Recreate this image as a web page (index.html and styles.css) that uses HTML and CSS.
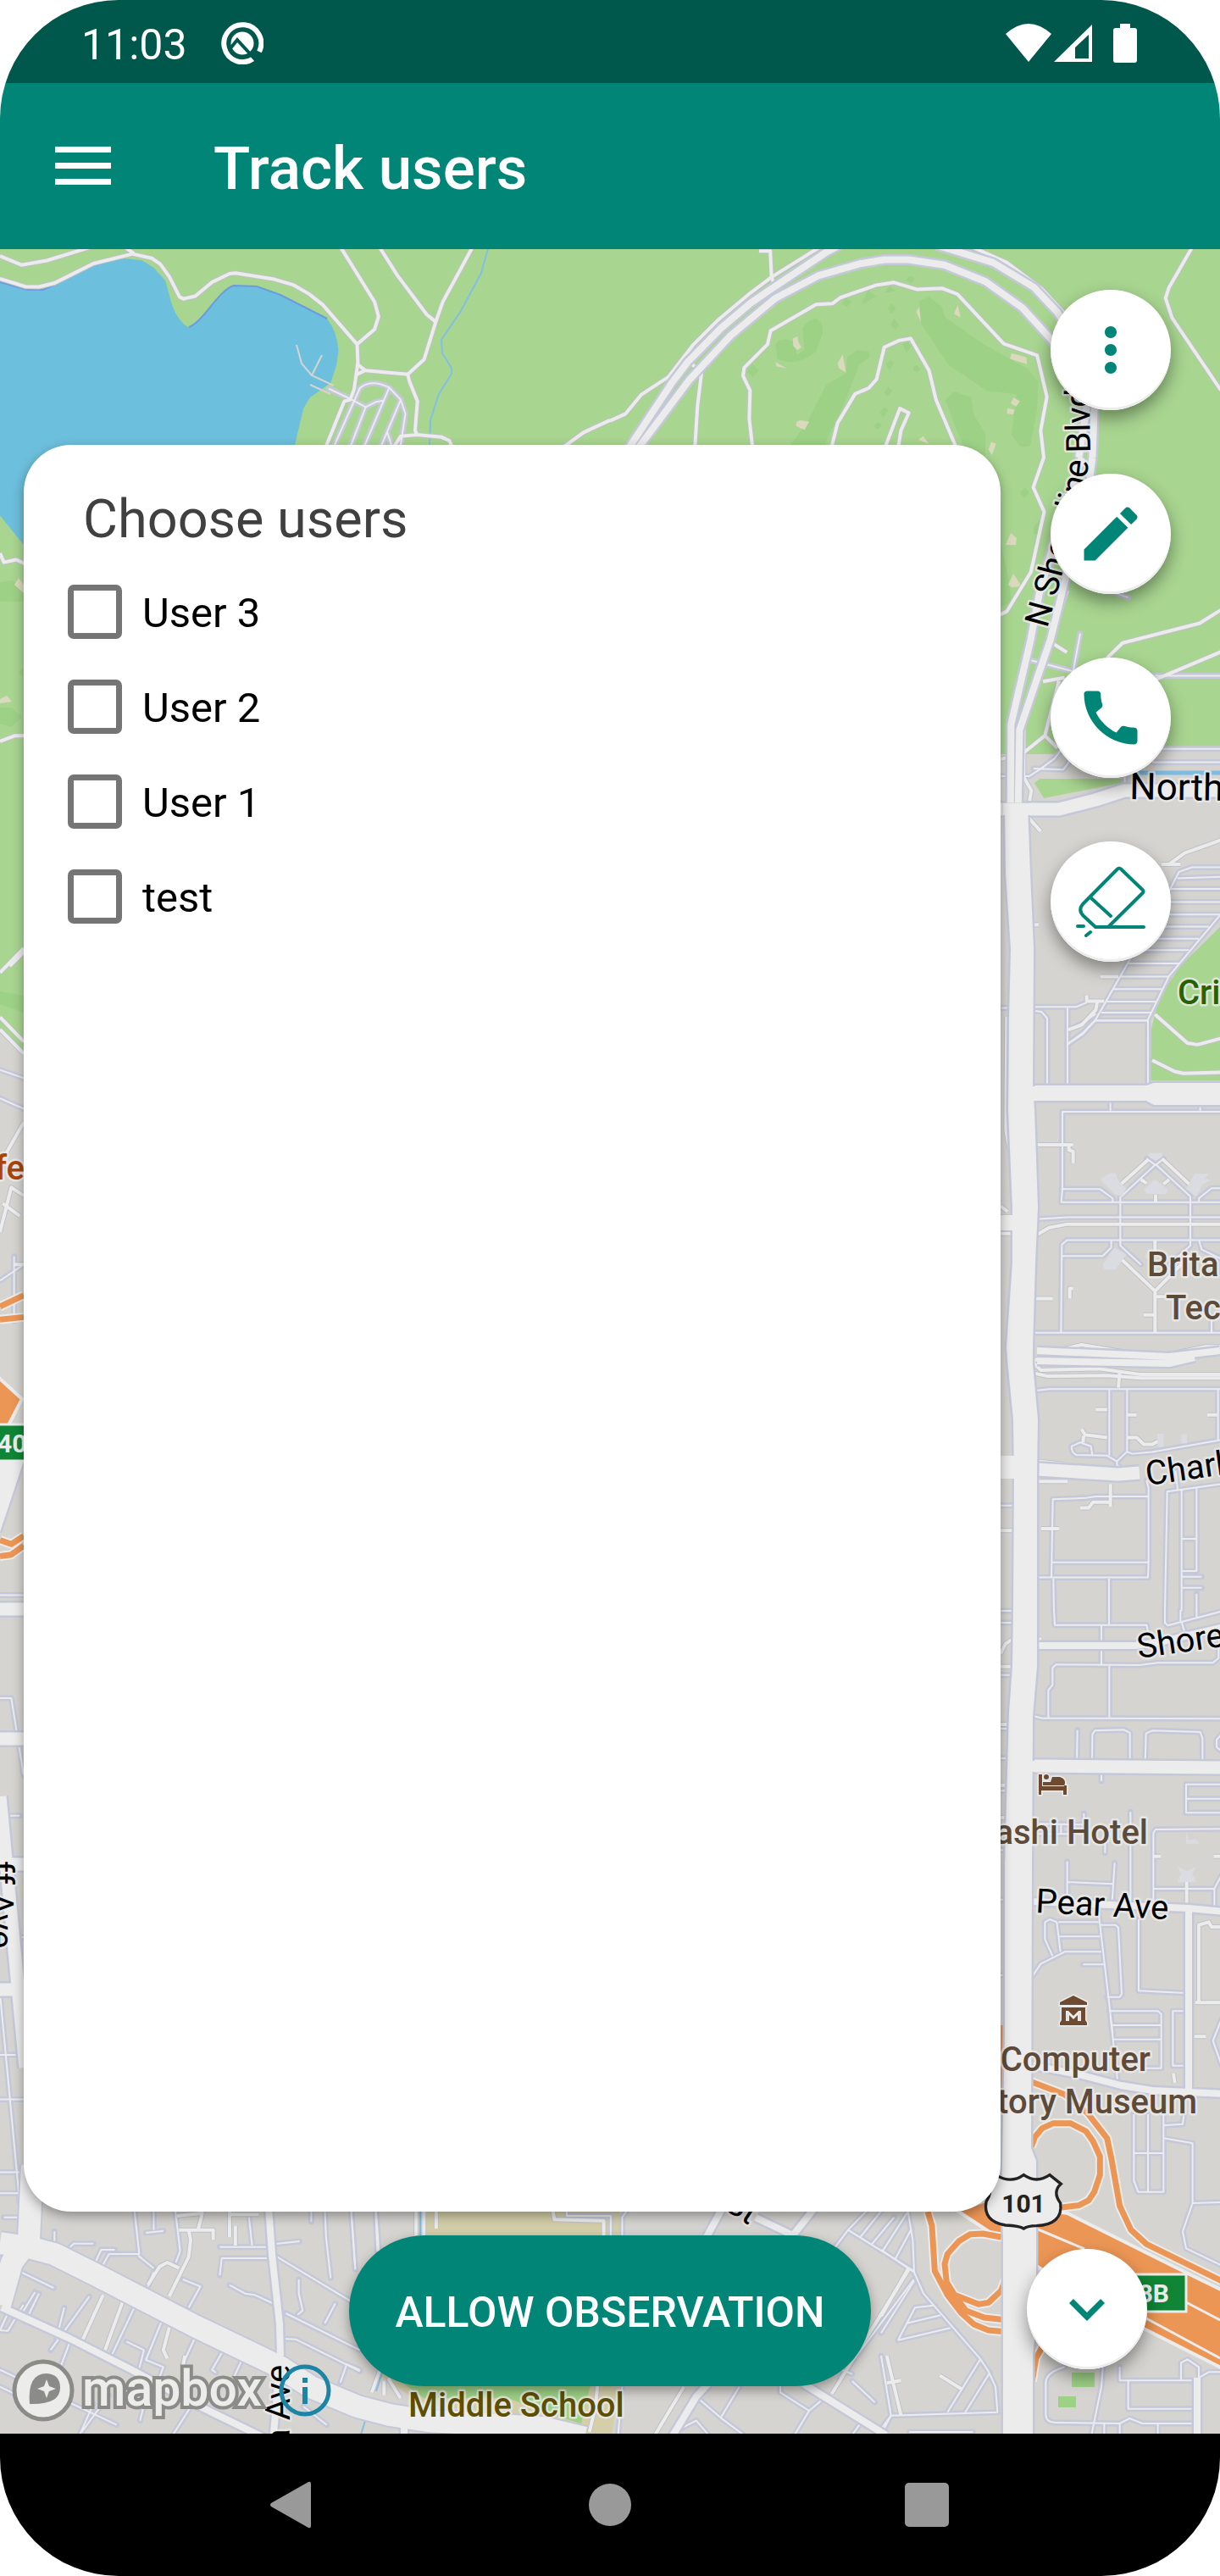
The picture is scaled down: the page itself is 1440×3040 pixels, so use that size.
FILE: index.html
```html
<!DOCTYPE html>
<html lang="en">
<head>
<meta charset="utf-8">
<meta name="viewport" content="width=device-width, initial-scale=1">
<title>Track users</title>
<link rel="stylesheet" href="styles.css">
</head>
<body>
<div class="screen">
  <div class="status-bar">
    <span class="clock">11:03</span>
    <svg class="status-logo" viewBox="0 0 50 50" aria-hidden="true">
      <path d="M37.500 43.500A22 22 0 1 1 45 35" fill="none" stroke="#fff" stroke-width="6"/>
      <circle cx="25" cy="25" r="13.500" fill="#fff"/>
      <path d="M11 31L19 21L41 45" fill="none" stroke="#00574b" stroke-width="4"/>
      <path d="M36 40l6-5 6 7-6 5z" fill="#00574b"/>
    </svg>
    <div class="status-icons">
      <svg class="wifi" viewBox="0 0 54 46" aria-hidden="true"><path d="M0 12Q27-12 54 12L27 45Z" fill="#fff"/></svg>
      <svg class="signal" viewBox="0 0 46 46" aria-hidden="true"><path fill-rule="evenodd" d="M45 1V45H0ZM41 13L25 28V41H41Z" fill="#fff"/></svg>
      <svg class="battery" viewBox="0 0 28 46" aria-hidden="true"><path d="M8 0H20V5H25Q28 5 28 8V43Q28 46 25 46H3Q0 46 0 43V8Q0 5 3 5H8Z" fill="#fff"/></svg>
    </div>
  </div>

  <header class="app-bar">
    <button class="menu-button" type="button" aria-label="Open menu">
      <svg viewBox="0 0 66 46" aria-hidden="true"><path d="M0 0H66V7H0ZM0 19H66V26H0ZM0 38H66V45H0Z" fill="currentColor"/></svg>
    </button>
    <h1>Track users</h1>
  </header>

  <main class="map-view">
    <svg class="map" viewBox="0 294 1440 2578" preserveAspectRatio="xMidYMid slice" aria-label="Map">
      <defs>
        <!-- lake side -->
        <g id="paths-lake" transform="scale(.4592 .34436)">
          <path d="M0 877L55 908L120 893L235 846M0 955L65 982L100 983L140 970L240 903L340 870L390 885L412 905L435 948L462 1018L472 1024L502 1015L545 967L590 938L605 936L705 957L755 977L795 1008L830 1045L918 1180M320 846L345 870"/>
          <path d="M875 846L963 1035L973 1085L963 1128L918 1180L920 1250L940 1270L1048 1283L1090 1232L1120 1103L1138 1035L1215 846M975 846L1022 945L1097 1078L1120 1103M920 1240L915 1290L910 1335L900 1370L885 1375L835 1540M915 1285L940 1268"/>
          <path d="M1048 1283L1052 1305L1073 1375L1067 1475L1072 1490L1135 1498L1155 1510L1165 1540M1072 1490L1030 1495L1008 1540M1440 1540L1500 1482L1568 1440"/>
        </g>
        <g id="lots-lake" transform="scale(.4592 .34436)">
          <path d="M845 1332L905 1370L940 1395L965 1378L985 1373M855 1540L925 1330Q955 1298 1000 1328L1030 1370L1042 1418L1028 1540M940 1395L898 1540M1000 1330L933 1540M1030 1370L976 1540M995 1480L1010 1540"/>
        </g>
        <!-- golf course -->
        <g id="paths-golf" transform="translate(720) scale(.4592 .34436)">
          <path d="M0 1442L40 1418L80 1353L150 1292L215 1180L275 1100L360 1005L415 950L540 846M383 860H412L415 945L428 1010M930 846L1020 900L1110 990L1165 1070M205 1240L235 1280L225 1390L218 1540"/>
          <path d="M367 1540L358 1435L360 1338L342 1288L345 1260L405 1180L413 1133L530 1043L572 1040L592 1020L685 977L730 968L790 992L853 988L893 1008L1012 1178L1098 1218L1123 1360L1107 1475L1115 1568L1088 1670L1116 1754L1082 1960L1020 2095L960 2135"/>
          <path d="M568 1540L585 1450L630 1350L665 1330L685 1300L705 1190L743 1167L773 1160L820 1270L838 1370L892 1540M705 1540L745 1400L768 1415L748 1475L740 1540M1497 846L1437 985L1428 1022L1445 1090L1570 1337"/>
        </g>
        <g id="arc-golf" transform="translate(720) scale(.4592 .34436)">
          <path d="M46 1540L160 1310L200 1240L285 1125L360 1040L420 985L555 865L590 840M70 1540L205 1300L310 1150L425 1022L535 945L645 903L705 890H768L860 908L965 965L1060 1055L1135 1165L1200 1290L1225 1400L1205 1568M840 840L985 900L1090 985L1150 1070L1200 1180L1235 1300L1245 1400L1240 1568"/>
        </g>
        <g id="arc-south" transform="translate(1160 540) scale(.33333 .44643)">
          <path d="M350 0L250 230L200 360L170 480L100 705L98 930M388 0L375 80L290 330L240 480L130 720L125 930"/>
        </g>
        <g id="paths-north" transform="translate(1160 540) scale(.33333 .44643)">
          <path d="M245 490L298 515M213 592L290 582M270 590L220 735L145 780L65 797M220 735L265 768M440 530L495 490L768 438L845 402M610 587L845 513M300 350L145 700V845L172 880L165 910M160 950L205 988"/>
          <path d="M633 1075H700M660 1075L715 1045L800 1023L845 1010M417 1372H480M366 1437H430M368 1440V1422M405 1440L400 1460L350 1500L305 1512M180 1235H198M610 1472L725 1548L760 1552L845 1535M600 1593L680 1623L710 1628L845 1625"/>
        </g>
        <g id="lots-north" transform="translate(1160 540) scale(.33333 .44643)">
          <path d="M165 535L320 565L345 465M440 350L515 370M610 577H845M620 770H845M600 805H845M65 842H165L205 823L255 795L280 770M180 822L285 825L310 800M503 840V880"/>
          <path d="M300 1550L355 1520L400 1485L665 1138L695 1095L740 1083H845M845 1205L660 1370L585 1485V1660M690 1112L845 1108M665 1140H845M640 1175H845M610 1208H840M585 1240H800M560 1272H765M540 1302H730M515 1337H695M485 1372H660M460 1405H635M440 1438H612M420 1467H595M395 1488H585M180 1452H330L370 1440M180 1462L208 1465L228 1482V1660M300 1455V1660M65 1455H100"/>
        </g>
        <!-- technology campus -->
        <g id="paths-campus" transform="translate(1160 1200) scale(.33333 .44643)">
          <path d="M187 338H320M305 342V352L320 356V387M190 577L235 557L300 548H845M490 442L585 378M635 375L735 445M560 430L580 440M660 430L640 442M612 470V490M490 640L610 725V833M610 725L735 630M610 590V620M610 740H650M570 788H610M180 745H248M308 745V718H320"/>
          <path d="M180 910L235 887L350 867L580 896L650 893L790 872H845M180 915L205 934L410 930L555 945H845M180 942L230 950L440 948L560 955H845M485 940L480 980M400 1038H440M511 1052H545M795 1052H830M350 1090L362 1105L440 1112M357 1108L355 1125M511 1112H545L570 1130H600L620 1122M195 1175L285 1182M195 1228H300M452 1235V1295M345 1298H375L390 1283H450M207 1353H270"/>
          <path d="M85 0L82 300L95 350M63 500L88 515M63 573H105M63 1358H105"/>
        </g>
        <g id="lots-campus" transform="translate(1160 1200) scale(.33333 .44643)">
          <path d="M302 35L350 18L400 -8M302 72L355 45L398 10H583M452 222V248M770 232V248M845 251H282V455L278 490H845M278 455H415L460 480V490M190 535L300 530H845M487 475V605L560 655M735 475V605L660 655M490 475L612 390L735 475M580 375L612 392L640 375M845 453H810L765 480V490M845 590H298L280 602L277 833M280 632H425L455 610V590M765 590L775 615L845 640M178 835H845M810 790V833"/>
          <path d="M190 988L235 984H845M448 984V1160M511 984V1150M833 984V1120M388 1158L383 1135L345 1125L315 1135Q312 1150 330 1158L440 1160L475 1175L510 1150L530 1155L600 1150L845 1118M475 1175V1185L515 1205M243 1480L248 1275L365 1272L400 1268H587M580 1225L587 1245V1440L585 1482H195M243 1442H585M250 1485L252 1570M447 1485V1570M845 1235L653 1255L645 1570M704 1250V1570M757 1245V1465H705M705 1380H757M705 1480H775M705 1509H775M757 1525V1570M683 1200L690 1250M63 1292H110"/>
        </g>
        <!-- around Pear Ave -->
        <g id="lots-pear" transform="translate(1160 1900) scale(.33333)">
          <path d="M252 0L255 53H580L587 85M447 0V53M420 53V195M645 0V45L655 55L845 5M700 0V40M757 0V30M705 45L715 80M232 380V285L247 265V205L260 193L555 195L620 187H815L835 170V130M448 195V380M178 375L210 383L845 385M335 425L333 540M387 540L388 440L397 427L500 424L521 435V540M575 540L578 437L600 427L770 432L778 455V545M845 440L828 460V485L845 500M420 565V605M845 617H720V718H845M720 668H845M358 720V760L200 757M277 757V793M195 793H320M433 860V820M523 715V1030M604 1035V790L612 777L845 775M604 987H820L845 940M820 987V1060M299 890V1010M467 895L458 1035M299 963L460 970"/>
          <path d="M410 1070L460 1500M220 1105L237 1095L262 1105L275 1210M220 1105V1165L247 1225M268 1105H410M272 1156H415M178 1293L205 1253L290 1210H420M355 1255H428M415 1115H470L480 1125L492 1360L485 1370H440M552 1095V1348L715 1356M715 1420H673V1613H715M447 1420H620L632 1430V1622H470M453 1470H632M460 1520H632M63 3H110M63 45H110M63 230H105M63 420H90M63 525H90M63 640H85M63 850H80M63 1025H78M63 1293H78"/>
        </g>
        <g id="paths-pear" transform="translate(1160 1900) scale(.33333)">
          <path d="M604 872H630M818 872H845M722 930V1040M765 1390V1115L800 1105L810 1122H845M752 1390H845M63 155L80 120L110 100M63 200H105M192 103H207M63 405H90M63 620H85M63 735H85"/>
        </g>
        <!-- interchange -->
        <g id="lots-junction" transform="translate(1040 2380) scale(.33333)">
          <path d="M812 0L838 230M1205 10L1175 85L1205 170M1000 280V620H910L895 580V345M945 345V620M895 483H1000M1000 385L1068 380L1072 350M1000 430L1103 448V660L1068 760L1080 820L1205 880M1103 660L1205 657"/>
          <path d="M5 830L95 690M50 858L108 750M0 825L117 905L150 980L350 1210L380 1255L405 1310L412 1400L35 1412L0 1200M117 905L112 790L95 690M117 935L0 1120M60 1145L120 1030L185 1022M90 1085L210 1057M60 1145L245 1102M350 1215L235 1400M385 1260L298 1400M35 1412L0 1460M100 1470H325"/>
          <path d="M650 1240Q580 1260 583 1300V1410Q585 1437 620 1437L845 1440V1480M785 1240L780 1310L745 1480M845 1240V1288H1110M875 1290V1388H1108M845 1440L880 1422L925 1440H1108M980 1440V1480M790 1440V1480M1062 1290V1225L1085 1213L1125 1240V1278L1160 1258H1205"/>
        </g>
        <g id="paths-junction" transform="translate(1040 2380) scale(.33333)">
          <path d="M1035 200L1040 235M1110 70H1150M97 890L0 1060M20 1200L70 1410M20 1297L70 1288M208 1270L288 1320"/>
        </g>
        <!-- residential south-west -->
        <g id="lots-sw" transform="translate(0 2560) scale(.4592 .33333)">
          <path d="M712 310L905 470M735 510L925 640M590 410L630 440L655 445L710 480M730 600L760 602L925 715M768 390V440L778 500L765 515M862 475L835 545M345 140L358 300L280 300M355 305L395 350M395 140V215M375 225L420 218M0 85H60M10 170H50M140 220V260M180 275L190 263H240M245 330L260 285H295M262 345L280 300M380 415L395 365M565 275H695M640 170L648 270M565 375L570 315H695M705 265L770 255M800 140V185M835 140L838 240L850 385M902 140L913 350M965 140L970 290M450 140L463 290L452 330M55 365L138 420M90 435L50 525M100 440L65 540M230 450L130 640M165 490L145 600M345 490L285 665"/>
          <path d="M415 540L375 675L420 700L395 790M325 610L370 640L355 720M500 600L470 690M570 650L545 710L555 720M620 680L600 740M0 710L300 905M180 610L150 720M240 830L205 940M280 800L210 930M500 820L440 950M380 780L360 890M0 770L120 850M20 510L0 570L20 572L60 480M485 490L515 415L470 390M890 695L875 755M780 840L840 905M0 330L40 350M890 690L925 710"/>
        </g>
        <g id="paths-sw" transform="translate(0 2560) scale(.4592 .33333)">
          <path d="M435 450L460 380L485 310L490 250L485 215M460 350L430 330L410 345L380 410M460 215H548V250M455 165L520 155L510 210M590 140V240M605 200V270M590 160H665M265 445L212 605M315 470L270 640M435 560L420 640L430 670M475 660L470 700"/>
        </g>
        <g id="paths-school" transform="translate(400 2580) scale(.4847 .33333)">
          <path d="M188 80V175M207 80V175M237 80V150M520 80L525 118L645 122V175M1390 290L1200 735M840 710L770 880M630 700L625 780L610 870M80 730L100 650M110 740V690M120 680L150 750"/>
        </g>
        <g id="lots-school" transform="translate(400 2580) scale(.4847 .33333)">
          <path d="M555 80V105H662V175M700 90L690 110V175M1240 155L1290 80M1270 180L1325 80M1298 205L1352 110M1240 155L1400 300M1240 155L1180 270M1400 330L1220 680M1225 650L1250 665M1250 690L1305 765M870 745L930 820L985 880M930 820L975 710M830 860L870 830L900 880M1075 700V730L1145 795L1110 880M1145 795L1190 740M1250 880L1275 830M1345 810L1320 880M690 710L680 880M90 80L98 240M30 80L40 295"/>
        </g>
        <!-- west edge -->
        <g id="lots-west" transform="translate(0 1100) scale(.33333 .9566)">
          <path d="M0 170L84 180M0 205L84 218M0 430L84 410M0 818H84M0 945H40L84 1040M0 1090H70M0 1240H84M0 1385H84M0 1440H84M0 1530H84M0 1310L70 1568M50 480V400"/>
        </g>
        <g id="paths-west" transform="translate(0 1100) scale(.33333 .9566)">
          <path d="M0 50L84 20M0 105L84 135M0 120L84 150M10 280L84 235M0 370L40 315L84 325M10 335L70 350M48 410H84"/>
        </g>
        <g id="paths-west-park" transform="translate(0 540) scale(.3827)">
          <path d="M0 295L12 323L50 315L76 327M0 875L45 858H76M30 1568L76 1522"/>
        </g>
        <!-- wide roads -->
        <g id="streets">
          <path d="M1224 1942H1340L1373 1937L1445 1920M1218 2244L1403 2252L1445 2256M1403 2256V2470M1216 2437L1273 2448L1323 2461L1360 2467L1445 2471M1413 2806V2876M853 2605L834 2640M892 2617L936 2638L962 2605M948 2813L1046 2874M836 2813L822 2828L793 2876M317 2605L321 2660L330 2743L331 2780M330 2790L323 2872M2 2723L83 2760L156 2797L230 2837L312 2877M477 2860V2876"/>
          <path d="M1224 1594L1380 1601L1440 1594M1224 1606L1380 1609L1410 1602"/>
        </g>
        <g id="avenues">
          <path d="M1180 955H1250L1293 944L1327 933H1445M1218 2084L1445 2086M1180 1443H1197M1180 1732H1197M1224 1734L1320 1740L1345 1738M0 1899H28M0 2052H28M0 2200H28M0 2348H28M0 2120L30 2440"/>
        </g>
        <g id="boulevards">
          <path d="M38 2555L34 2643L14 2670L0 2720"/>
          <path d="M0 2647L34 2652L64 2660L110 2683L230 2745L330 2793L367 2817L422 2840L460 2850L505 2857L640 2865L690 2877"/>
        </g>
        <g id="ramps" transform="translate(1040 2380) scale(.33333)">
          <path d="M532 230L650 275L730 340L800 430L815 500L845 670L885 755L940 805L1205 935M532 460L545 425L570 395L610 377H670L725 405L750 440L775 495V560L755 620L735 650L700 668L640 675M432 30L428 260"/>
          <path d="M165 690L180 740L190 900L235 985L285 1050L330 1090L380 1110L440 1115M240 960L300 1040L365 1065L440 1073M425 780L360 768L315 770L275 795L235 840L225 875L232 940L260 985L345 1018L380 1012L425 970L440 930M575 1160L548 1210L535 1290"/>
        </g>
        <g id="ramps-west" transform="translate(0 1100) scale(.33333 .9566)">
          <path d="M0 462L84 448M0 478L84 475M0 750L40 755L84 745M0 770L40 768L84 757"/>
        </g>
        <path id="shoreline" d="M1236 742L1252 684L1282 570L1287 530L1285 430"/>
      </defs>

      <rect class="land" y="294" width="1440" height="2578"/>
      <path class="park" d="M0 294H1440V882H1380L1240 890H600V1243H28L0 1218Z"/>
      <path class="park" d="M1221 924L1227 919H1328V923L1232 942ZM1440 1094L1393 1140L1368 1178L1359 1214L1358 1275H1440Z"/>
      <path class="water" transform="scale(.4592 .34436)" d="M0 965L70 992L110 992L150 970L240 905L320 886L365 892L395 918L425 962L440 1035Q455 1100 485 1122Q510 1110 540 1050Q575 990 600 978L660 980L720 1010L840 1092Q865 1130 870 1200L865 1250L850 1312L820 1340L797 1362L780 1400L755 1540L400 1867H61L0 1766Z"/>
      <path class="shore" d="M223 386C240 380 258 342 276 337L303 338L331 348L386 376M0 333L32 342L51 342L69 334"/>
      <path class="pier" d="M350 407L356 429L368 443L394 455M380 419L368 443M366 454L390 465"/>
      <path class="stream" d="M577 290L568 322L544 367L521 401L522 417L533 434L533 441L518 465L508 496L507 530"/>

      <g class="wood" transform="translate(720) scale(.4592 .34436)">
        <path d="M795 1030L820 1018L852 1050L862 1088L960 1180L1070 1260L1100 1305L1098 1400L1080 1528L1055 1532L1032 1490L1045 1350L970 1340L870 1250L800 1110ZM862 1370L885 1342L928 1362L935 1420L965 1490V1568H920L890 1470Z"/>
        <path d="M425 1180Q440 1150 470 1170L480 1215L500 1200L495 1125Q525 1070 545 1110L547 1140L530 1205Q480 1260 430 1230ZM605 1280L610 1225L635 1200L665 1205L667 1225L640 1250L600 1390L535 1568H440L510 1440L555 1320Z"/>
        <path d="M760 960l12-16 12 10-10 17zM595 1040l12-20 14 15-12 16zM650 1030l14-36 20 22-32 24zM705 1003l14-23 14 18zM714 1058l10-20 10 20-10 18zM722 1115l8-23 12 20-8 18zM752 1180l12-14 10 22-12 20zM710 1250l10-16 10 10-12 24zM778 1265l8-15 12 14-10 14zM705 1345l10-20 10 12-10 20zM693 1415l12-20 10 10-12 26zM677 1460l12-14 10 12-12 16zM352 1275l14-28 16 22-14 24z"/>
      </g>
      <g class="wood">
        <path d="M0 687L15 685L28 697V710H0ZM0 835H13L26 846L13 858L0 854ZM22 793L28 788V800ZM1181 640L1190 680L1194 710L1181 716ZM1204 582l6-7 5 6-6 7zM1220 622l6-7 6 6-5 12-7-3zM0 1170L28 1175V1195L0 1185Z"/>
      </g>
      <g class="sand" transform="translate(720) scale(.4592 .34436)">
        <path d="M470 1160L482 1152L484 1172L492 1190L482 1200L471 1185ZM585 1245L598 1215L607 1277L588 1262ZM425 1240L455 1263L428 1255ZM1032 1210L1070 1225L1072 1248L1028 1230ZM884 1075L894 1045L901 1088ZM787 1068L795 1053L799 1103ZM1037 1362L1054 1375L1044 1393L1030 1382ZM480 1445L488 1440L512 1445L500 1473L478 1460ZM980 1515L992 1520L982 1560L973 1540ZM793 1507L805 1495L820 1522ZM1022 1398L1040 1405L1036 1420L1020 1417Z"/>
      </g>
      <path class="sand" d="M1187 643L1193 629L1200 635L1199 643ZM1190 690L1196 677L1206 692L1194 693ZM17 690L22 682L28 690V700ZM0 825L8 821L14 828L0 830Z"/>

      <path class="school" d="M503 2605H732V2660H503ZM443 2800H732L722 2876H700L632 2852L500 2838Z"/>
      <path class="wood" d="M472 2810H698L686 2860L640 2846L600 2830H500Z"/>
      <path class="stream" d="M496 2605V2640M444 2822L451 2800M431 2857L426 2873"/>
      <path class="canal" d="M1343 912H1440"/>

      <g class="lot-case">
        <use href="#lots-lake"/><use href="#lots-north"/><use href="#lots-campus"/><use href="#lots-pear"/><use href="#lots-junction"/><use href="#lots-sw"/><use href="#lots-school"/><use href="#lots-west"/>
      </g>
      <g class="path-case">
        <use href="#paths-lake"/><use href="#paths-golf"/><use href="#paths-north"/><use href="#paths-campus"/><use href="#paths-pear"/><use href="#paths-junction"/><use href="#paths-sw"/><use href="#paths-school"/><use href="#paths-west"/><use href="#paths-west-park"/>
      </g>
      <g class="lot"><use href="#lots-lake"/><use href="#lots-north"/><use href="#lots-campus"/><use href="#lots-pear"/><use href="#lots-junction"/><use href="#lots-sw"/><use href="#lots-school"/><use href="#lots-west"/></g>
      <g class="path">
        <use href="#paths-lake"/><use href="#paths-golf"/><use href="#paths-north"/><use href="#paths-campus"/><use href="#paths-pear"/><use href="#paths-junction"/><use href="#paths-sw"/><use href="#paths-school"/><use href="#paths-west"/><use href="#paths-west-park"/>
      </g>
      <path class="building" transform="translate(1160 1200) scale(.33333 .44643)" d="M585 360H635V370L613 380L591 372ZM416 430L450 413H470L480 433L508 453L492 475L465 468ZM572 455L610 430L655 455L650 468H580ZM720 455L750 415H800L785 427L808 432L780 442L755 475ZM425 655L465 610L508 628L470 668H430ZM572 635L590 612V640ZM617 1102H640V1137H620ZM703 1103H723V1128H703Z"/>
      <path class="building" d="M1400 2161V2176H1416L1411 2170L1403 2172ZM1390 2203L1401 2208L1412 2203L1407 2211L1412 2221H1390L1394 2211Z"/>

      <g class="street-case"><use href="#streets"/><use href="#arc-golf"/><use href="#arc-south"/></g>
      <g class="avenue-case"><use href="#avenues"/></g>
      <g class="boulevard-case"><use href="#boulevards"/></g>
      <g class="street"><use href="#streets"/><use href="#arc-golf"/><use href="#arc-south"/></g>
      <g class="avenue"><use href="#avenues"/></g>
      <path class="road-area" d="M1219 1281H1353L1362 1278H1445V1304H1362L1353 1299H1219ZM0 1724H28L0 1808Z"/>
      <g class="boulevard"><use href="#boulevards"/></g>

      <path class="highway" d="M1130 2609L1163 2597L1260 2612L1400 2682L1445 2704V2796L1350 2748L1300 2722L1220 2672L1180 2642Z"/>
      <path class="highway" d="M-8 1620L26 1651L10 1682H-8Z"/>
      <path class="lane" d="M1223 2630L1280 2654M1400 2717L1440 2738M1353 2736L1440 2783"/>
      <g class="ramp-case"><use href="#ramps"/><use href="#ramps-west"/></g>
      <g class="ramp"><use href="#ramps"/><use href="#ramps-west"/></g>
      <path class="road-area" d="M1186 950L1187 1030L1193 1120L1191 1200L1190 1310L1195 1425V1490L1188 1590L1190 1615L1196 1675L1197 1740L1196 1900L1195 1967L1191 2020L1186 2200V2400L1182 2600L1184 2640V2876H1219V2780L1223 2740V2550L1217 2535L1218 2200L1219 2025L1224 1967V1740L1225 1675L1219 1610L1219 1590L1222 1490L1225 1425L1221 1310L1219 1280L1220 1120L1216 1030L1213 950Z"/>
      <path class="road-fill" d="M1184 948H1230V962H1184ZM1180 1434H1198V1452H1180ZM1180 1718H1198V1745H1180ZM1215 1282H1230V1299H1215ZM1215 2078H1230V2091H1215Z"/>
      <path class="wood" d="M1265 2800H1292V2817H1265ZM1249 2828H1270V2841H1249Z"/>

      <!-- road shields -->
      <path class="shield" transform="translate(1040 2380) scale(.33333)" d="M410 562Q460 592 505 560Q550 592 597 560L637 592Q605 620 635 660Q645 735 550 740Q520 740 505 750Q490 740 440 738Q360 725 372 655Q395 620 380 595Z"/>
      <text class="shield-text" x="1208" y="2611" text-anchor="middle">101</text>
      <rect class="exit" x="1320" y="2684" width="80" height="44"/>
      <text class="exit-text" x="1380" y="2717" text-anchor="end">8B</text>
      <rect class="exit" x="-40" y="1681" width="90" height="43"/>
      <text class="exit-text" x="-3" y="1714">40</text>

      <!-- point-of-interest symbols -->
      <path class="poi" d="M1226 2094h4v14h26q4-8-5-11h-9l-2 6h-9v4h28v11h-4v-5h-26v5h-3zM1232 2097a3 3 0 1 1 6 0a3 3 0 1 1-6 0"/>
      <path class="poi" fill-rule="evenodd" d="M1251 2363L1267 2355L1283 2363V2366H1251ZM1253 2369H1281V2384L1283 2387V2390H1251V2387L1253 2384ZM1258 2385H1262V2378L1267 2383L1272 2378V2385H1276V2373H1273L1267 2379L1261 2373H1258Z"/>

      <!-- labels -->
      <g class="road-label">
        <text><textPath href="#shoreline">N Shoreline Blvd</textPath></text>
        <text class="major-label" x="1333" y="943" transform="rotate(1 1333 943)">North</text>
        <text x="1354" y="1753" transform="rotate(-8 1354 1753)">Charl</text>
        <text x="1344" y="1957" transform="rotate(-8 1344 1957)">Shore</text>
        <text x="1222" y="2257" transform="rotate(3 1222 2257)">Pear Ave</text>
        <text transform="translate(-13 2196) rotate(90)">ff Ave</text>
        <text transform="translate(342 2888) rotate(-90)">a Ave</text>
        <text transform="translate(853 2606) rotate(33)">St</text>
      </g>
      <g class="place-label">
        <text x="1354" y="1506">Brita</text>
        <text x="1376" y="1557">Tec</text>
        <text x="1355" y="2176" text-anchor="end">ashi Hotel</text>
        <text x="1358" y="2444" text-anchor="end">Computer</text>
        <text x="1413" y="2494" text-anchor="end">tory Museum</text>
        <text class="park-label" x="1390" y="1185">Cri</text>
        <text class="school-label" x="482" y="2852">Middle School</text>
        <text class="food-label" x="29" y="1392" text-anchor="end">fe</text>
      </g>
    </svg>

    <section class="card" aria-labelledby="card-title">
      <h2 id="card-title">Choose users</h2>
      <label class="user"><input type="checkbox"><span>User 3</span></label>
      <label class="user"><input type="checkbox"><span>User 2</span></label>
      <label class="user"><input type="checkbox"><span>User 1</span></label>
      <label class="user"><input type="checkbox"><span>test</span></label>
    </section>
    <button class="allow" type="button">ALLOW OBSERVATION</button>

    <div class="tools">
      <button class="fab" type="button" aria-label="More options"><svg viewBox="0 0 24 24"><path fill="currentColor" d="M12 8c1.100 0 2-.9 2-2s-.9-2-2-2-2 .9-2 2 .9 2 2 2zm0 2c-1.100 0-2 .9-2 2s.9 2 2 2 2-.9 2-2-.9-2-2-2zm0 6c-1.100 0-2 .9-2 2s.9 2 2 2 2-.9 2-2-.9-2-2-2z"/></svg></button>
      <button class="fab" type="button" aria-label="Edit"><svg viewBox="0 0 24 24"><path fill="currentColor" d="M3 17.250V21h3.750L17.810 9.940l-3.750-3.750L3 17.250zM20.710 7.040c.39-.39.39-1.020 0-1.410l-2.340-2.340c-.39-.39-1.020-.39-1.410 0l-1.830 1.830 3.750 3.750 1.830-1.830z"/></svg></button>
      <button class="fab" type="button" aria-label="Call"><svg viewBox="0 0 24 24"><path fill="currentColor" d="M20.010 15.380c-1.230 0-2.420-.2-3.530-.56-.35-.12-.74-.03-1.010.24l-1.570 1.970c-2.830-1.350-5.480-3.900-6.890-6.830l1.950-1.660c.27-.28.35-.67.24-1.020-.37-1.110-.56-2.300-.56-3.530 0-.54-.45-.99-.99-.99H4.190C3.650 3 3 3.240 3 3.990 3 13.280 10.730 21 20.010 21c.71 0 .99-.63.99-1.180v-3.450c0-.54-.45-.99-.99-.99z"/></svg></button>
      <button class="fab" type="button" aria-label="Erase"><svg viewBox="0 0 84 84"><path fill="none" stroke="currentColor" stroke-width="4" stroke-linecap="round" stroke-linejoin="round" d="M54 3.500L80 28.500Q81 30 80 31.500L39 72M81 72H24L10 59Q3 52 9 45L50 3.500Q52 2 54 3.500M18 37L42 59M3 71H10M13 82L18 78"/></svg></button>
    </div>
    <button class="fab collapse" type="button" aria-label="Collapse panel"><svg viewBox="0 0 24 24"><path fill="currentColor" d="M16.590 8.590L12 13.170 7.410 8.590 6 10l6 6 6-6z"/></svg></button>

    <div class="attribution">
      <a class="mapbox" href="#mapbox">
        <svg viewBox="0 0 74 74" aria-hidden="true"><circle cx="37" cy="37" r="34" fill="#ececea" stroke="#8b8b88" stroke-width="5"/><path d="M21 53Q18 17 41 17Q57 18 57 34Q57 54 21 53Z" fill="#8b8b88"/><path d="M41 24l3 8 8 3-8 3-3 8-3-8-8-3 8-3z" fill="#ececea"/></svg>
        <span>mapbox</span>
      </a>
      <button class="info" type="button" aria-label="About this map"><svg viewBox="0 0 62 62"><circle cx="31" cy="31" r="28" fill="none" stroke="currentColor" stroke-width="5"/><path d="M28 16h6v6h-6zM28 27h6v20h-6z" fill="currentColor"/></svg></button>
    </div>
  </main>

  <nav class="system-nav" aria-label="System">
    <button type="button" aria-label="Back"><svg viewBox="0 0 56 56"><path d="M2 26L46 1Q49 0 49 3V53Q49 56 46 55L2 30Q0 28 2 26Z" fill="currentColor"/></svg></button>
    <button type="button" aria-label="Home"><svg viewBox="0 0 56 56"><circle cx="28" cy="28" r="25" fill="currentColor"/></svg></button>
    <button type="button" aria-label="Recent apps"><svg viewBox="0 0 56 56"><rect x="2" y="2" width="52" height="52" rx="5" fill="currentColor"/></svg></button>
  </nav>
</div>
</body>
</html>
```
FILE: styles.css
```css
* { box-sizing: border-box; }
body { margin: 0; background: #fff; font-family: Roboto, sans-serif; }
button { border: 0; padding: 0; background: none; color: inherit; font: inherit; cursor: pointer; }
svg { display: block; }
h1, h2 { margin: 0; }

.screen {
  display: flex;
  flex-direction: column;
  min-height: 100vh;
  border-radius: 140px;
  overflow: hidden;
}

/* system status bar */
.status-bar {
  display: flex;
  align-items: center;
  height: 98px;
  padding: 4px 98px 0 96px;
  background: #00574b;
  color: #fff;
}
.clock { padding-top: 4px; font-size: 50px; line-height: 56px; }
.status-logo { width: 50px; height: 50px; margin-left: 40px; }
.status-icons { display: flex; align-items: center; margin-left: auto; }
.wifi { width: 54px; height: 46px; }
.signal { width: 46px; height: 46px; margin-left: 3px; }
.battery { width: 28px; height: 46px; margin-left: 24px; }

/* app bar */
.app-bar {
  display: flex;
  align-items: center;
  gap: 121px;
  height: 196px;
  padding: 0 65px;
  background: #008577;
  color: #fff;
}
.menu-button svg { width: 66px; height: 46px; }
.app-bar h1 { padding-top: 6px; font-size: 71px; line-height: 84px; font-weight: 500; }

/* map */
.map-view {
  position: relative;
  flex: 1;
  display: flex;
  flex-direction: column;
  padding: 231px 0 56px 28px;
}
.map { position: absolute; inset: 0; width: 100%; height: 100%; background: #d5d4d0; }
.land { fill: #d5d4d0; }
.park { fill: #a8d590; }
.water { fill: #6cbfdd; }
.wood { fill: #9dd186; }
.sand { fill: #dbd9bd; }
.school { fill: #d4cea9; }
.building { fill: #dadce2; }
.shore, .pier, .stream, .canal, .lane { fill: none; stroke: #6b9be0; stroke-width: 2px; }
.pier { stroke: #d5d4d0; }
.stream { stroke: #82bfe4; }
.canal { stroke: #7dbbe2; stroke-width: 5px; }
.lane { stroke: #ececec; stroke-width: 3px; }

.lot-case, .lot, .path-case, .path,
.street-case, .street, .avenue-case, .avenue,
.boulevard-case, .boulevard, .ramp-case, .ramp {
  fill: none;
  stroke-linejoin: round;
}
.map g path { vector-effect: non-scaling-stroke; }
.lot-case { stroke: #c5c8d8; stroke-width: 7px; stroke-linecap: round; }
.lot { stroke: #ececec; stroke-width: 2px; }
.path-case { stroke: #bfc2c8; stroke-width: 6px; }
.path { stroke: #ececec; stroke-width: 4px; }
.street-case { stroke: #c5c8d8; stroke-width: 13px; }
.street { stroke: #ececec; stroke-width: 8px; }
.avenue-case { stroke: #c5c8d8; stroke-width: 20px; }
.avenue { stroke: #ececec; stroke-width: 15px; }
.boulevard-case { stroke: #c5c8d8; stroke-width: 30px; }
.boulevard { stroke: #ececec; stroke-width: 26px; }
.road-area { fill: #ececec; stroke: #c5c8d8; stroke-width: 5px; paint-order: stroke; }
.road-fill { fill: #ececec; }
.highway { fill: #ec9655; stroke: #ececec; stroke-width: 4px; }
.ramp-case { stroke: #ececec; stroke-width: 11px; }
.ramp { stroke: #ec9655; stroke-width: 7px; }
.shield { fill: #ececec; stroke: #222; stroke-width: 10px; }
.exit { fill: #0f8535; stroke: #ececec; stroke-width: 3px; }
.poi { fill: #6e4a31; stroke: #ececec; stroke-width: 3px; paint-order: stroke; }

.road-label, .place-label {
  font-size: 40px;
  paint-order: stroke;
  stroke: rgba(236, 236, 236, .8);
  stroke-width: 5px;
  stroke-linejoin: round;
}
.road-label { fill: #000; }
.major-label { font-size: 44px; }
.place-label { fill: #5e4a38; font-weight: 500; }
.park-label { fill: #256300; }
.school-label { fill: #5e4e00; }
.food-label { fill: #ab4409; }
.shield-text { font-size: 30px; font-weight: 700; fill: #222; }
.exit-text { font-size: 30px; font-weight: 700; fill: #ececec; }

/* user picker */
.card {
  position: relative;
  flex: 1;
  margin-right: 259px;
  padding: 50px 52px;
  border-radius: 56px;
  background: #fff;
  box-shadow: 0 5px 14px rgba(0, 0, 0, .35);
}
.card h2 {
  margin: 0 18px 15px;
  font-size: 63px;
  line-height: 76px;
  font-weight: 400;
  color: #404040;
}
.user {
  display: flex;
  align-items: center;
  gap: 24px;
  height: 112px;
  font-size: 49px;
  line-height: 56px;
  color: #000;
}
.user span { padding-top: 4px; }
.user input {
  appearance: none;
  width: 64px;
  height: 64px;
  margin: 0;
  border: 7px solid #757575;
  border-radius: 7px;
}
.user input:checked { background: #008577; border-color: #008577; }

.allow {
  position: relative;
  align-self: center;
  margin: 28px 28px 0 0;
  padding: 63px 54px 59px;
  border-radius: 89px;
  background: #008577;
  color: #fff;
  font-size: 50px;
  line-height: 56px;
  font-weight: 500;
  box-shadow: 0 5px 14px rgba(0, 0, 0, .35);
}

/* floating buttons */
.tools {
  position: absolute;
  top: 48px;
  right: 58px;
  display: flex;
  flex-direction: column;
  gap: 75px;
}
.fab {
  display: grid;
  place-items: center;
  width: 142px;
  height: 142px;
  border-radius: 50%;
  background: #fff;
  color: #008577;
  box-shadow: inset 0 -3px 0 #ececec, 0 9px 20px rgba(0, 0, 0, .4);
}
.fab svg { width: 84px; height: 84px; }
.collapse { position: absolute; right: 86px; bottom: 76px; }

.attribution {
  position: absolute;
  left: 14px;
  bottom: 14px;
  display: flex;
  align-items: center;
  gap: 20px;
}
.mapbox {
  display: flex;
  align-items: center;
  gap: 9px;
  color: #ececea;
  font-size: 59px;
  line-height: 70px;
  font-weight: 500;
  text-decoration: none;
}
.mapbox span { padding-bottom: 4px; -webkit-text-stroke: 8px #8b8b88; paint-order: stroke; }
.mapbox svg { width: 74px; height: 74px; }
.info { color: #1c84a5; }
.info svg { width: 62px; height: 62px; }

/* system navigation */
.system-nav {
  display: flex;
  align-items: center;
  justify-content: center;
  gap: 318px;
  height: 168px;
  background: #000;
  color: #999;
}
.system-nav svg { width: 56px; height: 56px; }
```
